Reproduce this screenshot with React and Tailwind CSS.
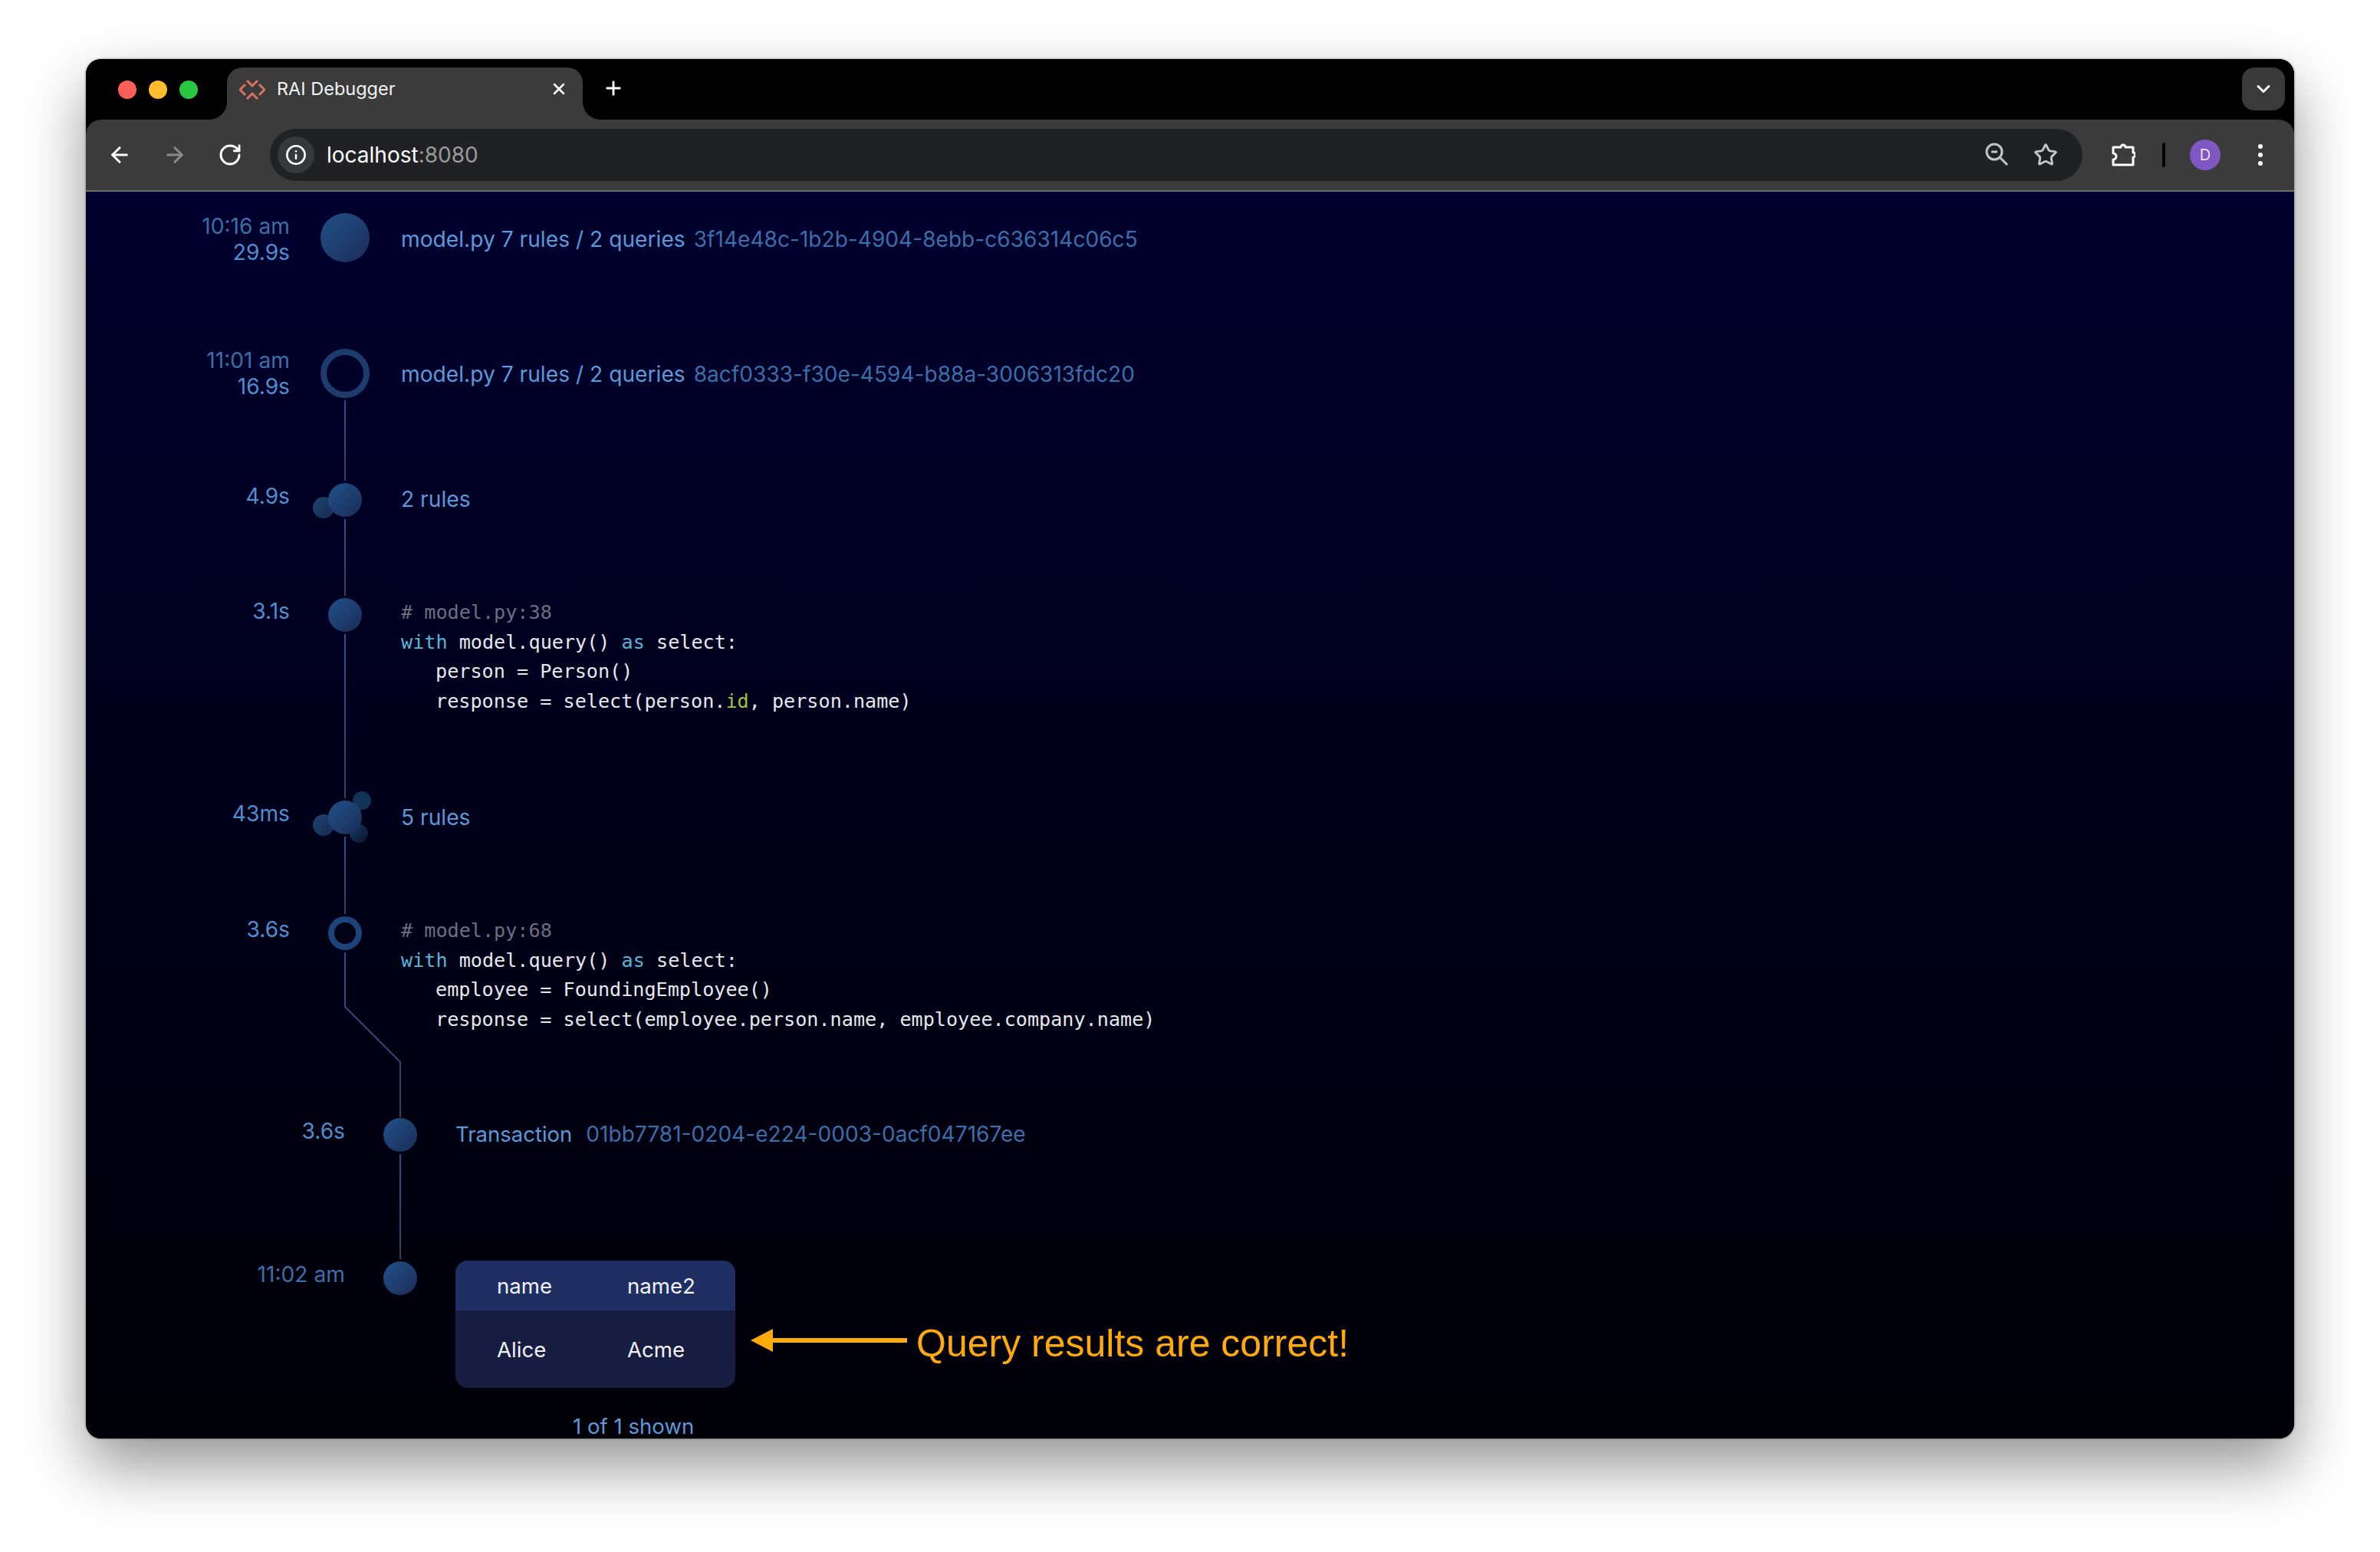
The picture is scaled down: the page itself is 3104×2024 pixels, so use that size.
import React from 'react';
import { ArrowLeft, ArrowRight, RotateCw, Info, Star, X, Plus, ChevronDown } from 'lucide-react';

const orb = 'rounded-full bg-gradient-to-br from-[#1f5289] to-[#1b2c58]';

function Dot({ kind }) {
  if (kind === 'big') return <div className={`h-16 w-16 shrink-0 ${orb}`}></div>;
  if (kind === 'bigRing') return <div className="h-16 w-16 shrink-0 rounded-full border-[8px] border-[#1c3c6c]"></div>;
  if (kind === 'ring') return <div className="h-11 w-11 shrink-0 rounded-full border-[8px] border-[#1d4478]"></div>;
  return (
    <div className="relative h-11 w-11 shrink-0">
      {kind === 'two' && <div className="absolute left-[-20px] top-[18px] h-7 w-7 rounded-full bg-gradient-to-br from-[#1b4473] to-[#182a4e]"></div>}
      {kind === 'five' && (
        <>
          <div className="absolute left-[-20px] top-[18px] h-7 w-7 rounded-full bg-gradient-to-br from-[#1b4473] to-[#182a4e]"></div>
          <div className="absolute left-[32px] top-[-12px] h-6 w-6 rounded-full bg-[#123355]"></div>
          <div className="absolute left-[28px] top-[31px] h-6 w-6 rounded-full bg-gradient-to-br from-[#143a60] to-[#0b1530]"></div>
        </>
      )}
      <div className={`absolute inset-0 ${orb}`}></div>
    </div>
  );
}

function Line() {
  return <div className="my-[3px] w-[2px] flex-1 bg-gradient-to-b from-[#27508f] to-[#4a3560]"></div>;
}

// elbow connector from the nested query down to its transaction
function Elbow() {
  return (
    <svg className="ml-[31px] mt-[3px] shrink-0 self-start overflow-visible" width="76" height="215" viewBox="0 0 76 215" fill="none" strokeWidth="2">
      <defs>
        <linearGradient id="elbow" x1="0" y1="0" x2="0" y2="1">
          <stop offset="0" stopColor="#27508f" />
          <stop offset="1" stopColor="#4a3560" />
        </linearGradient>
      </defs>
      <path d="M1 0V71L73 143V215" stroke="url(#elbow)" />
    </svg>
  );
}

function Row({ height, time, dot, line, elbow, nested, children }) {
  return (
    <div className={`flex ${height} ${nested ? 'pl-[72px]' : ''}`}>
      <div className="w-[266px] shrink-0 text-right text-[28.2px] leading-[34px] text-[#4f8fd0]">
        {time}
      </div>
      <div className="mx-10 flex w-16 shrink-0 flex-col items-center">
        <Dot kind={dot} />
        {line && <Line />}
        {elbow && <Elbow />}
      </div>
      <div className={`min-w-0 flex-1 ${nested ? '' : 'ml-px'}`}>{children}</div>
    </div>
  );
}

function Code({ comment, children }) {
  return (
    <div className="font-['DejaVu_Sans_Mono',monospace] text-[25.15px] leading-[38.6px] text-[#e6e8ee]">
      <div className="text-[#6a7080]">{comment}</div>
      {children}
    </div>
  );
}

function Uuid({ gap, children }) {
  return <span className={`${gap} text-[28.1px] text-[#3c6ea8]`}>{children}</span>;
}

function Chrome() {
  return (
    <>
      <div className="relative flex h-[79px] shrink-0 bg-black">
        <div className="flex h-[79px] items-center gap-4 pl-[42px]">
          <div className="h-6 w-6 rounded-full bg-[#ff5f57]"></div>
          <div className="h-6 w-6 rounded-full bg-[#febc2e]"></div>
          <div className="h-6 w-6 rounded-full bg-[#28c840]"></div>
        </div>
        {/* active tab */}
        <div className="relative ml-[38px] mt-[11px] flex h-[68px] w-[464px] items-start rounded-t-[20px] bg-[#3b3b3b] pl-4 pr-[19px] pt-[11px]">
          <svg className="absolute bottom-0 left-[-24px]" width="24" height="24" viewBox="0 0 24 24">
            <path d="M24 0V24H0C14 24 24 14 24 0Z" fill="#3b3b3b" />
          </svg>
          <svg className="absolute bottom-0 right-[-24px]" width="24" height="24" viewBox="0 0 24 24">
            <path d="M0 0V24H24C10 24 0 14 0 0Z" fill="#3b3b3b" />
          </svg>
          <svg className="mt-px shrink-0" width="34" height="34" viewBox="-17 -17 34 34" fill="none" stroke="#d8735f" strokeWidth="3">
            <path d="M-7 -12L0 -5L7 -12M-7 12L0 5L7 12M-9 -7L-16 0L-9 7M9 -7L16 0L9 7" />
          </svg>
          <span className="ml-[15px] font-['Inter',sans-serif] text-[23.5px] leading-[34px] text-[#f2f2f2]">RAI Debugger</span>
          <X className="ml-auto mt-[5px] h-6 w-6 text-white" strokeWidth={2.5} />
        </div>
        <Plus className="ml-[26px] mt-[24px] h-7 w-7 text-white" strokeWidth={2.5} />
        <div className="absolute right-3 top-[11px] flex h-14 w-14 items-center justify-center rounded-2xl bg-[#3a3a3a]">
          <ChevronDown className="h-7 w-7 text-white" strokeWidth={2.5} />
        </div>
      </div>

      <div className="flex h-[92px] shrink-0 items-center rounded-t-[20px] bg-[#3b3b3b] pl-[28px] pr-[28px]">
        <ArrowLeft className="h-8 w-8 text-white" strokeWidth={2.2} />
        <ArrowRight className="ml-10 h-8 w-8 text-[#8a8a8a]" strokeWidth={2.2} />
        <RotateCw className="ml-10 h-8 w-8 text-white" strokeWidth={2.2} />
        <div className="ml-[36px] flex h-[68px] w-[2364px] items-center rounded-full bg-[#202124] pl-[10px] pr-[32px]">
          <div className="flex h-12 w-12 items-center justify-center rounded-full bg-[#37383b]">
            <Info className="h-7 w-7 text-white" strokeWidth={2.2} />
          </div>
          <div className="ml-4 font-['Inter',sans-serif] text-[28px] text-white">
            localhost<span className="text-[#9a9a9a]">:8080</span>
          </div>
          <svg className="ml-auto shrink-0" width="32" height="32" viewBox="0 0 32 32" fill="none" stroke="#c4c4c4" strokeWidth="3">
            <circle cx="12" cy="12" r="10" />
            <path d="M8 12H16" />
            <path d="M19 19L29 29" />
          </svg>
          <Star className="ml-[31px] h-8 w-8 text-[#c4c4c4]" strokeWidth={2.2} />
        </div>
        <svg className="ml-[37px] shrink-0" width="32" height="32" viewBox="0 0 32 32" fill="none" stroke="white" strokeWidth="3" strokeLinejoin="round">
          <path d="M3 6H13A3 3 0 0 1 19 6H29V13A3 3 0 0 1 29 19V29H3V22A4 4 0 0 0 3 14Z" />
        </svg>
        <div className="ml-[35px] h-8 w-1 rounded-full bg-black"></div>
        <div className="ml-[32px] flex h-10 w-10 items-center justify-center rounded-full bg-[#7e57c2] font-['Inter',sans-serif] text-[20px] text-[#e8def8]">D</div>
        <div className="ml-[49px] flex flex-col gap-[5px]">
          <div className="h-[6px] w-[6px] rounded-full bg-white"></div>
          <div className="h-[6px] w-[6px] rounded-full bg-white"></div>
          <div className="h-[6px] w-[6px] rounded-full bg-white"></div>
        </div>
      </div>
      <div className="h-[2px] shrink-0 bg-[#6b6d70]"></div>
    </>
  );
}

export default function App() {
  return (
    <div className="h-[2024px] overflow-hidden bg-white pl-[112px] pt-[77px]">
      <div className="flex h-[1799px] w-[2880px] flex-col overflow-hidden rounded-[20px] bg-black shadow-[0_36px_80px_rgba(0,0,0,0.42),0_0_3px_rgba(0,0,0,0.5)]">
        <Chrome />

        <div className="min-h-0 flex-1 bg-gradient-to-b from-[#00002e] to-[#000008] pt-[28px] font-['Inter',sans-serif] text-[28.2px] leading-[34px] text-[#5b9ad8]">
          <Row height="h-[177px]" dot="big" time={<><div className="text-[#3c6ea8]">10:16 am</div><div>29.9s</div></>}>
            <div className="pt-[17px]">model.py 7 rules / 2 queries<Uuid gap="ml-[11px]">3f14e48c-1b2b-4904-8ebb-c636314c06c5</Uuid></div>
          </Row>

          <Row height="h-[175px]" dot="bigRing" line time={<div className="-mt-[2px]"><div className="text-[#3c6ea8]">11:01 am</div><div>16.9s</div></div>}>
            <div className="pt-[16px]">model.py 7 rules / 2 queries<Uuid gap="ml-[11px]">8acf0333-f30e-4594-b88a-3006313fdc20</Uuid></div>
          </Row>

          <Row height="h-[150px]" dot="two" line time="4.9s">
            <div className="pt-1">2 rules</div>
          </Row>

          <Row height="h-[264px]" dot="single" line time="3.1s">
            <Code comment="# model.py:38">
              <div><span className="text-[#56b6d6]">with</span> model.query() <span className="text-[#56b6d6]">as</span> select:</div>
              <div className="pl-[45px]">person = Person()</div>
              <div className="pl-[45px]">response = select(person.<span className="text-[#9ac63c]">id</span>, person.name)</div>
            </Code>
          </Row>

          <Row height="h-[151px]" dot="five" line time="43ms">
            <div className="pt-[5px]">5 rules</div>
          </Row>

          <Row height="h-[263px]" dot="ring" elbow time="3.6s">
            <Code comment="# model.py:68">
              <div><span className="text-[#56b6d6]">with</span> model.query() <span className="text-[#56b6d6]">as</span> select:</div>
              <div className="pl-[45px]">employee = FoundingEmployee()</div>
              <div className="pl-[45px]">response = select(employee.person.name, employee.company.name)</div>
            </Code>
          </Row>

          <Row height="h-[187px]" dot="single" line nested time="3.6s">
            <div className="pt-1"><span className="text-[27.5px]">Transaction</span><Uuid gap="ml-[18px]">01bb7781-0204-e224-0003-0acf047167ee</Uuid></div>
          </Row>

          <Row height="h-[231px]" dot="single" nested time={<div className="text-[#3c6ea8]">11:02 am</div>}>
            <div className="-mt-px flex items-start text-[27.6px]">
              <div className="w-[365px] shrink-0">
                <div className="overflow-hidden rounded-2xl bg-[#171d40] text-[#f0f2f8]">
                  <div className="grid h-[65px] grid-cols-[170px_1fr] items-center bg-[#1f2f63] pl-[54px]">
                    <div>name</div>
                    <div>name2</div>
                  </div>
                  <div className="grid h-[101px] grid-cols-[170px_1fr] items-center pl-[54px]">
                    <div>Alice</div>
                    <div>Acme</div>
                  </div>
                </div>
                <div className="ml-[153px] mt-[33px] whitespace-nowrap">1 of 1 shown</div>
              </div>
              <div className="ml-5 mt-[78px] flex items-center">
                <svg className="mb-2" width="204" height="30" viewBox="0 0 204 30">
                  <path d="M0 15L29 0V12H204V18H29V30Z" fill="#ffa90a" />
                </svg>
                <div className="ml-3 whitespace-nowrap font-['Liberation_Sans',sans-serif] text-[50px] leading-[60px] text-[#ffa90a]">Query results are correct!</div>
              </div>
            </div>
          </Row>
        </div>
      </div>
    </div>
  );
}
